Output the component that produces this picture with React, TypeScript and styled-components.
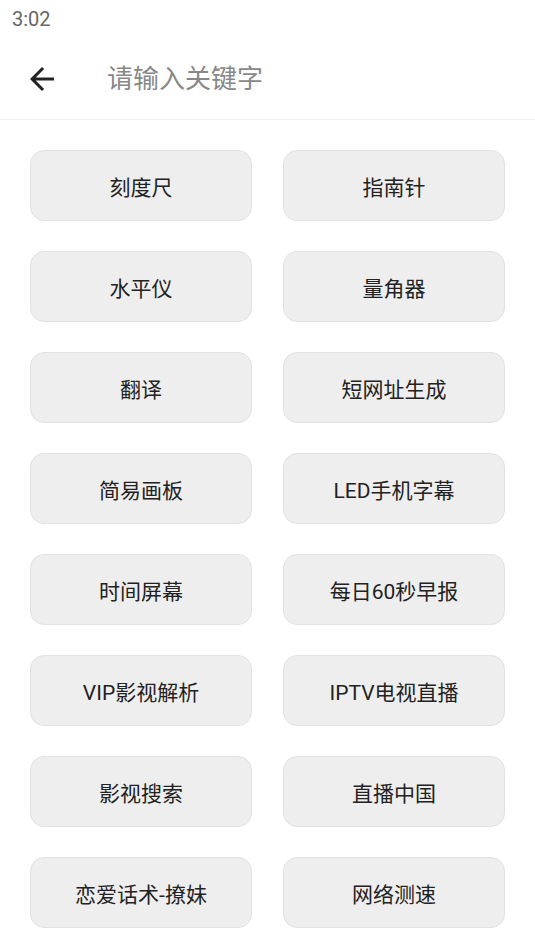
import styled, { createGlobalStyle } from 'styled-components'

const GlobalStyle = createGlobalStyle`
  html, body {
    margin: 0;
    padding: 0;
    background: #ffffff;
  }
  body {
    font-family: Roboto, "Noto Sans CJK SC", sans-serif;
  }
`

const Screen = styled.div`
  width: 535px;
  min-height: 951px;
  background: #ffffff;
`

const StatusBar = styled.div`
  height: 38px;
  padding-left: 12px;
  display: flex;
  align-items: center;
  font-size: 20px;
  color: #666666;
`

const Toolbar = styled.header`
  height: 82px;
  display: flex;
  align-items: center;
  padding-left: 24px;
  border-bottom: 1px solid #eeeeee;
  box-sizing: border-box;
`

const BackButton = styled.button`
  width: 36px;
  height: 36px;
  padding: 0;
  border: none;
  background: none;
  display: flex;
  align-items: center;
  justify-content: center;
  color: #222222;
`

const SearchInput = styled.input`
  margin-left: 47px;
  flex: 1;
  border: none;
  outline: none;
  background: transparent;
  font-family: Roboto, "Noto Sans CJK SC", sans-serif;
  font-size: 26px;
  color: #333333;
  padding: 0;

  &::placeholder {
    color: #888888;
  }
`

const ToolGrid = styled.div`
  display: grid;
  grid-template-columns: 222px 222px;
  column-gap: 31px;
  row-gap: 30px;
  padding: 30px 30px 0;
`

const ToolCard = styled.button`
  height: 71px;
  box-sizing: border-box;
  border: 1px solid #e2e2e2;
  border-radius: 14px;
  background: #eeeeee;
  font-family: Roboto, "Noto Sans CJK SC", sans-serif;
  font-size: 21px;
  color: #222222;
  display: flex;
  align-items: center;
  justify-content: center;
  padding: 0;
`

const tools = [
  '刻度尺', '指南针',
  '水平仪', '量角器',
  '翻译', '短网址生成',
  '简易画板', 'LED手机字幕',
  '时间屏幕', '每日60秒早报',
  'VIP影视解析', 'IPTV电视直播',
  '影视搜索', '直播中国',
  '恋爱话术-撩妹', '网络测速',
]

export default function App() {
  return (
    <Screen>
      <GlobalStyle />
      <StatusBar>3:02</StatusBar>
      <Toolbar>
        <BackButton aria-label="back">
          <svg width="36" height="36" viewBox="0 0 24 24" fill="currentColor">
            <path d="M20 11H7.83l5.59-5.59L12 4l-8 8 8 8 1.41-1.41L7.83 13H20v-2z" />
          </svg>
        </BackButton>
        <SearchInput placeholder="请输入关键字" />
      </Toolbar>
      <ToolGrid>
        {tools.map((name) => (
          <ToolCard key={name}>{name}</ToolCard>
        ))}
      </ToolGrid>
    </Screen>
  )
}
